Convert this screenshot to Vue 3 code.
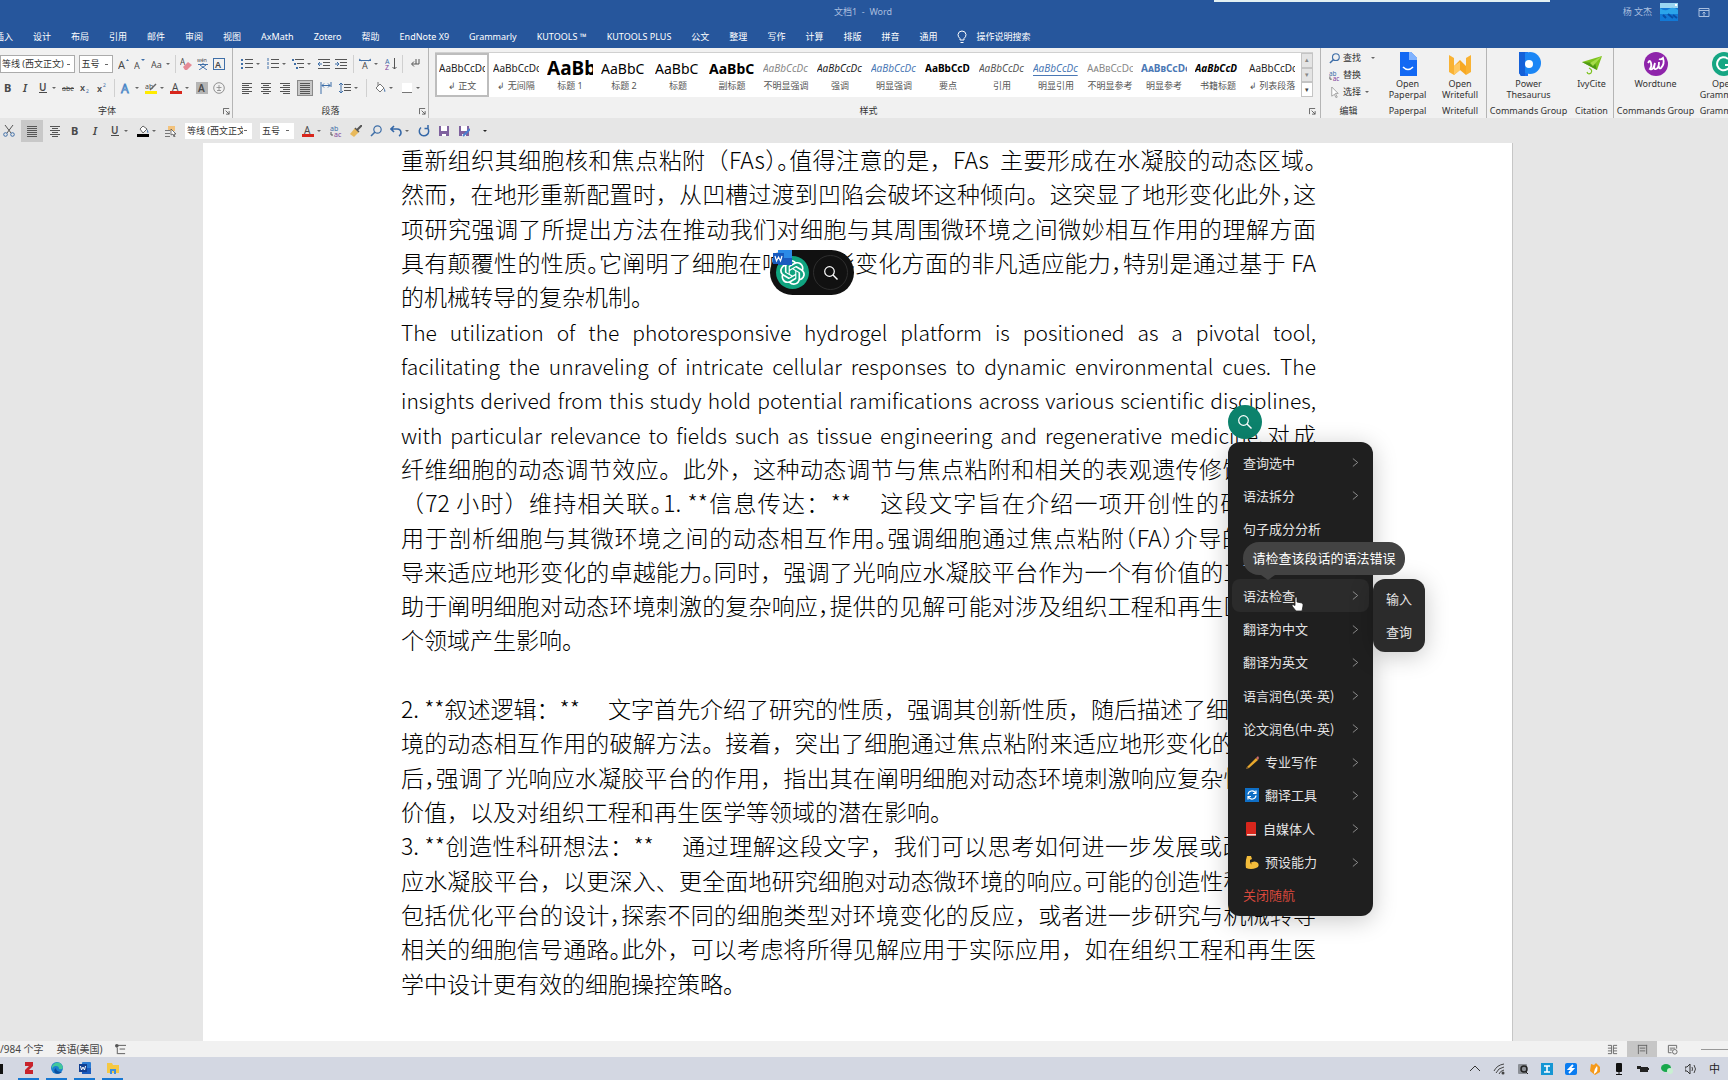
<script setup>
const t = (s, x, y, size, fill, extra = '') =>
  `<text x="${x}" y="${y}" font-size="${size}" fill="${fill}" font-family="Noto Sans, sans-serif" ${extra}>${s}</text>`
const rows = (list, color = '#555') =>
  list.map(([x1, y, x2]) => `<path d="M${x1} ${y}.5H${x2}" stroke="${color}" stroke-width="1"/>`).join('')
const blue = '#3f6fa8'
const gray = '#4a4a4a'

const icons = {
  bold: t('B', 2, 10, 11, gray, 'font-weight="700"'),
  italic: t('I', 4, 10, 11, gray, 'font-style="italic" font-weight="600"'),
  underline: t('U', 2, 9, 10, gray, 'font-weight="600"') + rows([[2, 10, 10]], gray),
  strike: t('abc', 0, 9, 7, gray) + rows([[0, 6, 12]], gray),
  sub: t('x', 1, 9, 9, gray, 'font-weight="600"') + t('2', 7, 11, 5, blue),
  sup: t('x', 1, 10, 9, gray, 'font-weight="600"') + t('2', 7, 5, 5, blue),
  grow: t('A', 0, 11, 11, gray) + `<path d="M8 3l1.500-2 1.500 2z" fill="${blue}"/>`,
  shrink: t('A', 0, 11, 9, gray) + `<path d="M7 1h4L9 3z" fill="${blue}"/>`,
  aa: t('Aa', 0, 10, 9, gray),
  eraser: t('A', 0, 7, 8, gray) + '<path d="M3 9l5-5 4 3-5 5H5z" fill="#e58a96"/>',
  pinyin: t('wén', 0, 4, 5, gray) + `<path d="M1 6.500h10M6 5v2M9 7L2 12M3 7l7 5" stroke="${blue}" fill="none"/>`,
  boxA: `<rect x=".5" y=".5" width="11" height="11" fill="none" stroke="${blue}"/>` + t('A', 2, 10, 9, gray, 'font-weight="600"'),
  outlineA: t('A', 1, 11, 12, '#eaf2fb', 'stroke="#4b86c6" stroke-width=".8"'),
  marker: t('ab', 0, 7, 7, gray) + '<path d="M5 8l6-6" stroke="#666" stroke-width="1.500"/><rect y="9" width="12" height="3" fill="#ffeb00"/>',
  colorA: t('A', 2, 9, 10, gray) + '<rect y="9" width="12" height="3" fill="#d8261c"/>',
  shadeA: '<rect width="12" height="12" fill="#b5b5b5"/>' + t('A', 2, 10, 10, gray, 'font-weight="600"'),
  circled: '<circle cx="6" cy="6" r="5.300" fill="none" stroke="#777" stroke-width=".8"/><path d="M3.500 5.500h5M6 3v6M4 8.500h4" stroke="#888" stroke-width=".8"/>',
  bullets: rows([[4, 1, 12], [4, 5, 12], [4, 9, 12]]) + `<path d="M0 1h2v2H0zM0 5h2v2H0zM0 9h2v2H0z" fill="${blue}"/>`,
  numbers: rows([[4, 1, 12], [4, 5, 12], [4, 9, 12]]) + `<path d="M1 0v3M1 4v3M1 8v3" stroke="${blue}"/>`,
  multi: rows([[3, 1, 12], [5, 5, 12], [7, 9, 12]]) + `<path d="M0 1h2v2H0zM2 5h2v2H2zM4 9h2v2H4z" fill="${blue}"/>`,
  outdent: rows([[0, 1, 12], [5, 4, 12], [5, 7, 12], [0, 10, 12]]) + `<path d="M4 6H0M2 4L0 6l2 2" stroke="${blue}" fill="none"/>`,
  indent: rows([[0, 1, 12], [5, 4, 12], [5, 7, 12], [0, 10, 12]]) + `<path d="M0 6h4M2 4l2 2-2 2" stroke="${blue}" fill="none"/>`,
  asian: t('A', 3, 11, 9, gray) + `<path d="M0 1l3 2M12 1L9 3M0 2.500h12" stroke="${blue}" fill="none"/>`,
  sort: t('A', 0, 6, 7, blue) + t('Z', 0, 12, 7, '#80459b') + '<path d="M9.500 0v11M7.500 9l2 2 2-2" stroke="#555" fill="none"/>',
  mark: '<path d="M10 1v5H3M5 3.500L2.500 6 5 8.500M7 1v5" stroke="#555" fill="none"/>',
  left: rows([[1, 1, 11], [1, 3, 8], [1, 5, 11], [1, 7, 8], [1, 9, 11], [1, 11, 8]]),
  center: rows([[1, 1, 11], [3, 3, 9], [1, 5, 11], [3, 7, 9], [1, 9, 11], [3, 11, 9]]),
  right: rows([[1, 1, 11], [4, 3, 11], [1, 5, 11], [4, 7, 11], [1, 9, 11], [4, 11, 11]]),
  justify: rows([[1, 1, 11], [1, 3, 11], [1, 5, 11], [1, 7, 11], [1, 9, 11], [1, 11, 11]]),
  spread: `<path d="M1 0v12M11 0v5M2 3.500h8M4 1.500L2 3.500l2 2M8 1.500l2 2-2 2" stroke="${blue}" fill="none"/>`,
  spacing: rows([[5, 2, 12], [5, 5, 12], [5, 8, 12]]) + `<path d="M2 1v10M0 3l2-2 2 2M0 9l2 2 2-2" stroke="${blue}" fill="none"/>`,
  bucket: '<path d="M2 6l4-4 4 4-4 4z" fill="#fff" stroke="#777"/><path d="M4 0v4" stroke="#777"/><path d="M10 6q2 3 1 4-1 0-1-4" fill="#3f6fa8"/>',
  bucketBlack: '<path d="M3 4l3-3 4 3-4 4z" fill="#fff" stroke="#666"/><path d="M10 4q2 3 1 4-1 0-1-4" fill="#3f6fa8"/><rect y="9" width="12" height="3" fill="#000"/>',
  border: '<path d="M1 1h10v9H1z" fill="#fff"/><path d="M1 10.500h10" stroke="#777"/>',
  cut: '<path d="M2 0l6 8M10 0L4 8" stroke="#555" fill="none"/><circle cx="2.500" cy="9.500" r="1.800" fill="none" stroke="#3f6fa8"/><circle cx="9.500" cy="9.500" r="1.800" fill="none" stroke="#3f6fa8"/>',
  pick: '<path d="M3 1h7v5H3z" fill="#f2c27c"/><path d="M0 5.500h5M0 8.500h5M0 11.500h5" stroke="#777"/><path d="M6 4l5 5H9l1 3-1 0-1-3-2 1z" fill="#fff" stroke="#555" stroke-width=".8"/>',
  replace: t('ab', 0, 6, 7, blue) + t('ac', 4, 12, 7, '#80459b') + '<path d="M1 7v3h2" stroke="#555" fill="none"/>',
  brush: '<path d="M12 0L7 5" stroke="#555" stroke-width="2"/><path d="M5 3l4 4-5 5-4-3z" fill="#e8b95c"/><path d="M5 3l4 4" stroke="#555" stroke-width="1.500"/>',
  find: '<circle cx="7.500" cy="4.500" r="3.700" fill="none" stroke="#3f6fa8" stroke-width="1.200"/><path d="M5 7l-4 4" stroke="#3f6fa8" stroke-width="1.600"/>',
  undo: '<path d="M4 1L1 4l3 3M1 4h6q4 0 4 4 0 2-2 3" fill="none" stroke="#3568a8" stroke-width="1.600"/>',
  redo: '<path d="M9.500 3A4.700 4.700 0 1 1 3 2.500M6.500 3.500H10V0" fill="none" stroke="#3568a8" stroke-width="1.500"/>',
  save: '<path d="M1 1h10v10H1z" fill="#80629f"/><path d="M3 1h6v5H3zM4 9h4v2H4z" fill="#fff"/>',
  saveEdit: '<path d="M1 1h10v10H1z" fill="#80629f"/><path d="M3 1h6v5H3zM4 9h4v2H4z" fill="#fff"/><path d="M5 11l7-7" stroke="#4a7fd0" stroke-width="2"/>',
  arrow: '<path d="M3 0l7 7H7l2 4-1.500.500L6 8l-3 2z" fill="#fff" stroke="#888" stroke-width=".8"/>',
  book: '<path d="M1 1.500h4v9H1M11 1.500H7v9h4M1 4.500h4M7 4.500h4M1 7.500h4M7 7.500h4" fill="none" stroke="#666"/>',
  page: '<path d="M1.500 1v10M10.500 1v10M1 1.500h10M3 4.500h6M3 7.500h6" fill="none" stroke="#666"/>',
  web: '<path d="M10.500 5V1.500h-9v8H5M3 4.500h6M3 6.500h3" fill="none" stroke="#666"/><circle cx="8.500" cy="8.500" r="2.500" fill="none" stroke="#666"/>',
  track: '<path d="M3 1.500h9M5 5.500h6M3 10.500h8M2.500 4v7" fill="none" stroke="#555"/><circle cx="2" cy="2" r="2" fill="#555"/>',
}

const fontRow1 = [
  { i: 'grow', n: '增大字号' }, { i: 'shrink', n: '减小字号' }, { i: 'aa', n: '更改大小写', d: 1 }, { sep: 1 },
  { i: 'eraser', n: '清除格式' }, { i: 'pinyin', n: '拼音指南' }, { i: 'boxA', n: '字符边框' },
]
const fontRow2 = [
  { i: 'bold', n: '加粗' }, { i: 'italic', n: '倾斜' }, { i: 'underline', n: '下划线', d: 1 }, { i: 'strike', n: '删除线' },
  { i: 'sub', n: '下标' }, { i: 'sup', n: '上标' }, { sep: 1 }, { i: 'outlineA', n: '文本效果', d: 1 },
  { i: 'marker', n: '突出显示', d: 1 }, { i: 'colorA', n: '字体颜色', d: 1 }, { i: 'shadeA', n: '字符底纹' }, { i: 'circled', n: '带圈字符' },
]
const paraRow1 = [
  { i: 'bullets', n: '项目符号', d: 1 }, { i: 'numbers', n: '编号', d: 1 }, { i: 'multi', n: '多级列表', d: 1 },
  { i: 'outdent', n: '减少缩进' }, { i: 'indent', n: '增加缩进' }, { sep: 1 }, { i: 'asian', n: '中文版式', d: 1 },
  { i: 'sort', n: '排序' }, { sep: 1 }, { i: 'mark', n: '显示标记' },
]
const paraRow2 = [
  { i: 'left', n: '左对齐' }, { i: 'center', n: '居中' }, { i: 'right', n: '右对齐' }, { i: 'justify', n: '两端对齐', on: 1 },
  { i: 'spread', n: '分散对齐' }, { i: 'spacing', n: '行距', d: 1 }, { sep: 1 }, { i: 'bucket', n: '底纹', d: 1 }, { i: 'border', n: '边框', d: 1 },
]
const quickA = [
  { i: 'cut', n: '剪切' }, { i: 'justify', n: '两端对齐', on: 1 }, { i: 'center', n: '居中' }, { i: 'bold', n: '加粗' },
  { i: 'italic', n: '倾斜' }, { i: 'underline', n: '下划线', d: 1 }, { i: 'bucketBlack', n: '底纹', d: 1 }, { i: 'pick', n: '选择对象' },
]
const quickB = [
  { i: 'colorA', n: '字体颜色', d: 1 }, { i: 'replace', n: '替换' }, { i: 'brush', n: '格式刷' }, { i: 'find', n: '查找' },
  { i: 'undo', n: '撤消', d: 1 }, { i: 'redo', n: '重复' }, { i: 'save', n: '保存' }, { i: 'saveEdit', n: '另存为' },
]

const tabs = ['插入', '设计', '布局', '引用', '邮件', '审阅', '视图', 'AxMath', 'Zotero', '帮助', 'EndNote X9', 'Grammarly',
  'KUTOOLS ™', 'KUTOOLS PLUS', '公文', '整理', '写作', '计算', '排版', '拼音', '通用']

const styles = [
  { s: 'AaBbCcDc', n: '↲ 正文', c: 'chosen' }, { s: 'AaBbCcDc', n: '↲ 无间隔' }, { s: 'AaBb', n: '标题 1', c: 'h1' },
  { s: 'AaBbC', n: '标题 2', c: 'h2' }, { s: 'AaBbC', n: '标题', c: 'h2' }, { s: 'AaBbC', n: '副标题', c: 'h2 strong' },
  { s: 'AaBbCcDc', n: '不明显强调', c: 'it pale' }, { s: 'AaBbCcDc', n: '强调', c: 'it' }, { s: 'AaBbCcDc', n: '明显强调', c: 'it blue' },
  { s: 'AaBbCcD', n: '要点', c: 'strong' }, { s: 'AaBbCcDc', n: '引用', c: 'it dim' }, { s: 'AaBbCcDc', n: '明显引用', c: 'it blue ul' },
  { s: 'AaBbCcDc', n: '不明显参考', c: 'pale caps' }, { s: 'AaBbCcDc', n: '明显参考', c: 'blue strong caps' },
  { s: 'AaBbCcD', n: '书籍标题', c: 'strong it' }, { s: 'AaBbCcDc', n: '↲ 列表段落' },
]

const addins = [
  { n: 'Open Paperpal', g: 'Paperpal', w: 'mid',
    svg: '<path d="M4 0h11l6 6v18H4z" fill="#1268f3"/><path d="M13 0h2l6 6v2h-8z" fill="#7fb2ff"/><path d="M7 15q5 5 10 0" stroke="#fff" stroke-width="1.600" fill="none"/>' },
  { n: 'Open Writefull', g: 'Writefull', w: 'mid', end: 1,
    svg: '<path d="M1 3l5 3v17l-5-3z" fill="#f9b233"/><path d="M23 3l-5 3v17l5-3z" fill="#f9b233"/><path d="M6 14l6-6 6 6v9l-6-5-6 5z" fill="#f7a823"/><path d="M6 14l6-4v8l-6 5z" fill="#ffc861"/>' },
  { n: 'Power Thesaurus', g: 'Commands Group', w: 'wide',
    svg: '<path d="M2 0h9v24l-7 0-2-3z" fill="#1d6ff2"/><circle cx="13" cy="11" r="11" fill="#1b86f5"/><path d="M2 0h6v24H4l-2-3z" fill="#1460d8"/><circle cx="12" cy="12" r="4" fill="#fff"/>' },
  { n: 'IvyCite', g: 'Citation', w: 'slim', end: 1,
    svg: '<path d="M2 10L22 4l-5 14z" fill="#7dc21e"/><path d="M2 10l13 1 2 7z" fill="#4f9a12"/><path d="M22 4L10 11l3 3z" fill="#a6dc4a"/><path d="M9 16q4 2 2 5-3 2-4-1" fill="none" stroke="#7dc21e" stroke-width="1.200"/>' },
  { n: 'Wordtune', g: 'Commands Group', w: 'wide',
    svg: '<circle cx="12" cy="12" r="12" fill="#8e24aa"/><path d="M4 11q2-4 3 0t-1 6q3 2 5-6-2 7 1 6t3-7q-1 8 2 6 4-4 2-10-2 2-4 1" fill="none" stroke="#fff" stroke-width="1.800"/>' },
  { n: 'Open Grammarly', g: 'Grammarly', w: 'mid',
    svg: '<circle cx="12" cy="12" r="12" fill="#15a683"/><path d="M16 7a6.500 6.500 0 1 0 2 6h-5" fill="none" stroke="#fff" stroke-width="2"/>' },
]

// Text between bars is set with half-width punctuation; `han` is a Chinese tail on an English line.
const lines = [
  { t: '重新组织其细胞核和焦点粘附（FAs）|。|值得注意的是，FAs \u00a0主要形成在水凝胶的动态区域|。' },
  { t: '然而，在地形重新配置时，从凹槽过渡到凹陷会破坏这种倾向。这突显了地形变化此外|，|这' },
  { t: '项研究强调了所提出方法在推动我们对细胞与其周围微环境之间微妙相互作用的理解方面' },
  { t: '具有颠覆性的性质|。|它阐明了细胞在响应地形变化方面的非凡适应能力|，|特别是通过基于 FA' },
  { t: '的机械转导的复杂机制。', k: 'last' },
  { t: 'The utilization of the photoresponsive hydrogel platform is positioned as a pivotal tool,', k: 'en' },
  { t: 'facilitating the unraveling of intricate cellular responses to dynamic environmental cues. The', k: 'en' },
  { t: 'insights derived from this study hold potential ramifications across various scientific disciplines,', k: 'en' },
  { t: 'with particular relevance to fields such as tissue engineering and regenerative medicine.', han: '对成', k: 'en' },
  { t: '纤维细胞的动态调节效应。此外，这种动态调节与焦点粘附和相关的表观遗传修饰在长期' },
  { t: '（72 小时）维持相关联|。|1. **信息传达：**\u2003 这段文字旨在介绍一项开创性的研究，应' },
  { t: '用于剖析细胞与其微环境之间的动态相互作用|。|强调细胞通过焦点粘附|（FA）|介导的机械转' },
  { t: '导来适应地形变化的卓越能力|。|同时，强调了光响应水凝胶平台作为一个有价值的工具，有' },
  { t: '助于阐明细胞对动态环境刺激的复杂响应|，|提供的见解可能对涉及组织工程和再生医学等多' },
  { t: '个领域产生影响。', k: 'last' },
  { t: '\u00a0', k: 'last' },
  { t: '2. **叙述逻辑：**\u2003 文字首先介绍了研究的性质，强调其创新性质，随后描述了细胞与微环' },
  { t: '境的动态相互作用的破解方法。接着，突出了细胞通过焦点粘附来适应地形变化的能力|。|最' },
  { t: '后|，|强调了光响应水凝胶平台的作用，指出其在阐明细胞对动态环境刺激响应复杂性方面的' },
  { t: '价值，以及对组织工程和再生医学等领域的潜在影响。', k: 'last' },
  { t: '3. **创造性科研想法：**\u2003 通过理解这段文字，我们可以思考如何进一步发展或改进光响' },
  { t: '应水凝胶平台，以更深入、更全面地研究细胞对动态微环境的响应|。|可能的创造性科研想法' },
  { t: '包括优化平台的设计|，|探索不同的细胞类型对环境变化的反应，或者进一步研究与机械转导' },
  { t: '相关的细胞信号通路|。|此外，可以考虑将所得见解应用于实际应用，如在组织工程和再生医' },
  { t: '学中设计更有效的细胞操控策略。', k: 'last' },
].map((l) => ({ ...l, parts: l.t.split('|') }))

const menu = [
  { n: '查询选中', m: 1 }, { n: '语法拆分', m: 1 }, { n: '句子成分分析' }, { n: '单词解析' }, { n: '语法检查', m: 1, on: 1 },
  { n: '翻译为中文', m: 1 }, { n: '翻译为英文', m: 1 }, { n: '语言润色(英-英)', m: 1 }, { n: '论文润色(中-英)', m: 1 },
  { n: '专业写作', m: 1, e: '<path d="M2 12L11 3l2 2-9 8-3 1z" fill="#e9a82c"/><path d="M11 3l2-2 1 2-1 2z" fill="#c96b6b"/><path d="M2 12l2 1-3 1z" fill="#5a4632"/>' },
  { n: '翻译工具', m: 1, e: '<rect x="0" y="0" width="14" height="14" fill="#0f6fc6"/><path d="M3 6.500A4 4 0 0 1 10.500 5M11 2.500V5.500H8M11 7.500A4 4 0 0 1 3.500 9M3 11.500V8.500h3" fill="none" stroke="#fff" stroke-width="1.200"/>' },
  { n: '自媒体人', m: 1, book: 1, e: '<rect x="1" y="0" width="10" height="14" rx="1" fill="#d8261c"/><path d="M2 12h9v1.500H2z" fill="#f0d9d0"/>' },
  { n: '预设能力', m: 1, e: '<path d="M2 1h4l1 3-2 1 0 3q5-3 8 0 2 4-2 5-5 2-10 0-1-6 1-12z" fill="#f3bc3b"/><path d="M5 8l2 1" stroke="#b97f17"/>' },
  { n: '关闭随航', red: 1 },
]

const pinned = [
  { n: 'Zotero', s: '<path d="M2 0h8v4L6 8h4v4H2V8l4-4H2z" fill="#c8232b"/>' },
  { n: 'Edge', s: '<circle cx="6" cy="6" r="6" fill="#1b7fd0"/><path d="M1 4q3-5 8-3 3 2 3 5-1 2-4 1 0-3-3-3-3 0-4 3z" fill="#43c79a"/><path d="M5 6q0 4 6 4-3 3-7 1-2-3 1-5z" fill="#0c4f9e"/>' },
  { n: 'Word', s: '<rect x="3" y="0" width="9" height="12" rx="1" fill="#2b7cd3"/><rect x="3" y="6" width="9" height="6" fill="#185abd"/><rect x="0" y="2" width="8" height="8" fill="#103f91"/><path d="M1.500 4l1 4L4 5l1.500 3 1-4" stroke="#fff" fill="none"/>' },
  { n: '文件资源管理器', s: '<path d="M0 1h5l1 2h6v8H0z" fill="#f5c843"/><path d="M3 7h6v5H7V9H5v3H3z" fill="#3f8fdc"/>' },
]
const tray = [
  { n: '显示隐藏的图标', s: '<path d="M1 8l5-5 5 5" fill="none" stroke="#333"/>' },
  { n: '网络', s: '<path d="M1 8Q4 2 11 1M3 10Q5 5 11 4M6 11q1-3 5-4" fill="none" stroke="#444"/><circle cx="10" cy="10" r="1.500" fill="#444"/>' },
  { n: '截图', s: '<rect x="1" y="1" width="9" height="10" rx="1" fill="#8b8f96"/><circle cx="7" cy="6" r="3" fill="none" stroke="#222" stroke-width="1.500"/><path d="M9 9l2 2" stroke="#222"/>' },
  { n: '输入工具', s: '<rect width="12" height="12" fill="#1496d4"/><path d="M3 3h6M3 9h6M6 3v6" stroke="#fff" stroke-width="1.600"/>' },
  { n: '随航', s: '<rect width="12" height="12" rx="2" fill="#0a7cf0"/><path d="M8 2L4 6h4l-4 4" fill="none" stroke="#fff" stroke-width="1.800"/>' },
  { n: '火绒', s: '<path d="M2 1l3 1 2-2 4 4v5l-5 3-5-4z" fill="#f59a1b"/><path d="M8 3q2 5-3 8 0-5 3-8z" fill="#fff"/>' },
  { n: '麦克风', s: '<rect x="3" y="0" width="6" height="9" rx="1" fill="#111"/><path d="M6 9v2M3 11.500h6" stroke="#111"/>' },
  { n: '电池', s: '<path d="M3 4h8v5H3zM11 5h1v2h-1zM0 3h4v3H0z" fill="#222"/>' },
  { n: '微信', s: '<ellipse cx="5" cy="5" rx="5" ry="4" fill="#18a84c"/><ellipse cx="9" cy="8" rx="3" ry="3" fill="#c8f0d2"/>' },
  { n: '音量', s: '<path d="M0 4h2l3-3v10L2 8H0z" fill="none" stroke="#333"/><path d="M7 4q1 2 0 4M9 2q3 4 0 8" fill="none" stroke="#444"/>' },
]
</script>

<template>
  <div class="app">
    <header class="title">
      <span class="peek"></span>
      <span class="doc-name">文档1 &nbsp;- &nbsp;Word</span>
      <div class="user">
        <span>杨 文杰</span>
        <svg class="avatar" viewBox="0 0 18 18"><rect width="18" height="18" fill="#1279d6" /><path d="M0 0h18v5H0z" fill="#9ad6f2" /><path d="M0 5q5 4 9 1t9 1v4H0z" fill="#2ba4ea" /><path d="M3 12l3 3M8 11l5 4M13 12l4 3" stroke="#0a4ea6" stroke-width="2" /><path d="M15 1h2v2h-2z" fill="#fff" /></svg>
        <button class="plain" aria-label="功能区显示选项"><svg width="12" height="12" viewBox="0 0 12 12"><path d="M1 2.500h10v8H1zM1 4.500h10M6 10V6M4.500 7.500L6 6l1.500 1.500" fill="none" stroke="#a9bfdf" /></svg></button>
      </div>
    </header>

    <nav class="tabs">
      <a v-for="x in tabs" :key="x" href="#">{{ x }}</a>
      <a href="#" class="tell"><svg width="10" height="14" viewBox="0 0 10 14"><path d="M3 10V8.500Q1 7 1 4.500 1.500 1 5 1t4 3.500Q9 7 7 8.500V10zM3.500 12.500h3" fill="none" stroke="#fff" /></svg>操作说明搜索</a>
    </nav>

    <section class="ribbon">
      <div class="group font-group">
        <div class="tools">
          <div class="tool-row">
            <select class="box font-name" aria-label="字体"><option>等线 (西文正文)</option></select>
            <select class="box font-size" aria-label="字号"><option>五号</option></select>
            <template v-for="(b, k) in fontRow1" :key="k">
              <i v-if="b.sep" class="sep"></i>
              <button v-else class="tool" :class="{ on: b.on }" :aria-label="b.n"><svg viewBox="0 0 12 12" v-html="icons[b.i]"></svg><span v-if="b.d" class="dd"></span></button>
            </template>
          </div>
          <div class="tool-row">
            <template v-for="(b, k) in fontRow2" :key="k">
              <i v-if="b.sep" class="sep"></i>
              <button v-else class="tool" :class="{ on: b.on }" :aria-label="b.n"><svg viewBox="0 0 12 12" v-html="icons[b.i]"></svg><span v-if="b.d" class="dd"></span></button>
            </template>
          </div>
        </div>
        <div class="label">字体<button class="launch" aria-label="字体设置"><svg viewBox="0 0 8 8"><path d="M.5 7V.5H7M3 3l4 4M7 3.500V7H3.500" fill="none" stroke="#555" /></svg></button></div>
      </div>

      <div class="group para-group">
        <div class="tools">
          <div v-for="(row, r) in [paraRow1, paraRow2]" :key="r" class="tool-row">
            <template v-for="(b, k) in row" :key="k">
              <i v-if="b.sep" class="sep"></i>
              <button v-else class="tool" :class="{ on: b.on }" :aria-label="b.n"><svg viewBox="0 0 12 12" v-html="icons[b.i]"></svg><span v-if="b.d" class="dd"></span></button>
            </template>
          </div>
        </div>
        <div class="label">段落<button class="launch" aria-label="段落设置"><svg viewBox="0 0 8 8"><path d="M.5 7V.5H7M3 3l4 4M7 3.500V7H3.500" fill="none" stroke="#555" /></svg></button></div>
      </div>

      <div class="group style-group">
        <div class="gallery">
          <button v-for="x in styles" :key="x.n" class="style" :class="x.c"><span class="sample">{{ x.s }}</span><span class="name">{{ x.n }}</span></button>
          <div class="scroller"><button aria-label="上一行">▴</button><button aria-label="下一行">▾</button><button class="more" aria-label="其他">▾</button></div>
        </div>
        <div class="label">样式<button class="launch" aria-label="样式窗格"><svg viewBox="0 0 8 8"><path d="M.5 7V.5H7M3 3l4 4M7 3.500V7H3.500" fill="none" stroke="#555" /></svg></button></div>
      </div>

      <div class="group edit-group">
        <div class="edits">
          <button><svg viewBox="0 0 12 12" v-html="icons.find"></svg>查找<span class="dd far"></span></button>
          <button><svg viewBox="0 0 12 12" v-html="icons.replace"></svg>替换</button>
          <button><svg viewBox="0 0 12 12" v-html="icons.arrow"></svg>选择<span class="dd"></span></button>
        </div>
        <div class="label">编辑</div>
      </div>

      <div v-for="a in addins" :key="a.n" class="group addin" :class="[a.w, { end: a.end }]">
        <button><svg viewBox="0 0 24 24" v-html="a.svg"></svg><span>{{ a.n }}</span></button>
        <div class="label">{{ a.g }}</div>
      </div>
    </section>

    <div class="quick">
      <button v-for="(b, k) in quickA" :key="k" class="tool" :class="{ on: b.on }" :aria-label="b.n"><svg viewBox="0 0 12 12" v-html="icons[b.i]"></svg><span v-if="b.d" class="dd"></span></button>
      <select class="box q-name" aria-label="快速字体"><option>等线 (西文正文)</option></select>
      <select class="box q-size" aria-label="快速字号"><option>五号</option></select>
      <button v-for="(b, k) in quickB" :key="'b' + k" class="tool" :aria-label="b.n"><svg viewBox="0 0 12 12" v-html="icons[b.i]"></svg><span v-if="b.d" class="dd"></span></button>
      <button class="tool" aria-label="自定义"><span class="dd dark"></span></button>
    </div>

    <main class="work">
      <article class="paper">
        <p v-for="(l, k) in lines" :key="k" :class="l.k"><span v-for="(s, j) in l.parts" :key="j" :class="{ tight: j % 2 }">{{ s }}</span><span v-if="l.han" class="han">{{ l.han }}</span></p>
      </article>
    </main>

    <footer class="status">
      <span>/984 个字</span><span>英语(美国)</span>
      <svg viewBox="0 0 12 12" v-html="icons.track"></svg>
      <div class="views">
        <button aria-label="阅读视图"><svg viewBox="0 0 12 12" v-html="icons.book"></svg></button>
        <button class="on" aria-label="页面视图"><svg viewBox="0 0 12 12" v-html="icons.page"></svg></button>
        <button aria-label="Web 版式视图"><svg viewBox="0 0 12 12" v-html="icons.web"></svg></button>
        <i class="track"></i>
      </div>
    </footer>

    <div class="taskbar">
      <i class="edge-bit"></i>
      <button v-for="p in pinned" :key="p.n" class="pin" :aria-label="p.n"><svg viewBox="0 0 12 12" v-html="p.s"></svg></button>
      <div class="tray">
        <button v-for="p in tray" :key="p.n" :aria-label="p.n"><svg viewBox="0 0 12 12" v-html="p.s"></svg></button>
        <span>中</span>
      </div>
    </div>

    <div class="pill">
      <button class="gpt" aria-label="助手"><svg viewBox="0 0 24 24"><path fill="#fff" d="M22.2819 9.8211a5.9847 5.9847 0 0 0-.5157-4.9108 6.0462 6.0462 0 0 0-6.5098-2.9A6.0651 6.0651 0 0 0 4.9807 4.1818a5.9847 5.9847 0 0 0-3.9977 2.9 6.0462 6.0462 0 0 0 .7427 7.0966 5.98 5.98 0 0 0 .511 4.9107 6.051 6.051 0 0 0 6.5146 2.9001A5.9847 5.9847 0 0 0 13.2599 24a6.0557 6.0557 0 0 0 5.7718-4.2058 5.9894 5.9894 0 0 0 3.9977-2.9001 6.0557 6.0557 0 0 0-.7475-7.0729zm-9.022 12.6081a4.4755 4.4755 0 0 1-2.8764-1.0408l.1419-.0804 4.7783-2.7582a.7948.7948 0 0 0 .3927-.6813v-6.7369l2.02 1.1686a.071.071 0 0 1 .038.052v5.5826a4.504 4.504 0 0 1-4.4945 4.4944zm-9.6607-4.1254a4.4708 4.4708 0 0 1-.5346-3.0137l.142.0852 4.783 2.7582a.7712.7712 0 0 0 .7806 0l5.8428-3.3685v2.3324a.0804.0804 0 0 1-.0332.0615L9.74 19.9502a4.4992 4.4992 0 0 1-6.1408-1.6464zM2.3408 7.8956a4.485 4.485 0 0 1 2.3655-1.9728V11.6a.7664.7664 0 0 0 .3879.6765l5.8144 3.3543-2.0201 1.1685a.0757.0757 0 0 1-.071 0l-4.8303-2.7865A4.504 4.504 0 0 1 2.3408 7.872zm16.5963 3.8558L13.1038 8.364 15.1192 7.2a.0757.0757 0 0 1 .071 0l4.8303 2.7913a4.4944 4.4944 0 0 1-.6765 8.1042v-5.6772a.79.79 0 0 0-.407-.667zm2.0107-3.0231l-.142-.0852-4.7735-2.7818a.7759.7759 0 0 0-.7854 0L9.409 9.2297V6.8974a.0662.0662 0 0 1 .0284-.0615l4.8303-2.7866a4.4992 4.4992 0 0 1 6.6802 4.66zM8.3065 12.863l-2.02-1.1638a.0804.0804 0 0 1-.038-.0567V6.0742a4.4992 4.4992 0 0 1 7.3757-3.4537l-.142.0805L8.704 5.459a.7948.7948 0 0 0-.3927.6813zm1.0976-2.3654l2.602-1.4998 2.6069 1.4998v2.9994l-2.5974 1.4997-2.6067-1.4997Z" /></svg></button>
      <button class="seek" aria-label="搜索"><svg viewBox="0 0 16 16"><circle cx="6.500" cy="6.500" r="4.800" fill="none" stroke="#fff" stroke-width="1.200" /><path d="M10 10l4.500 4.500" stroke="#fff" stroke-width="1.400" /></svg></button>
      <svg class="word-badge" viewBox="0 0 20 15"><rect x="5" width="14" height="15" fill="#2b8ae6" /><rect x="5" y="8" width="14" height="7" fill="#1a5bbf" /><rect y="3" width="11" height="11" fill="#185abd" /><path d="M2 6l1.500 5L5.500 7l2 4L9 6" fill="none" stroke="#fff" stroke-width="1.200" /></svg>
    </div>

    <div class="assist">
      <button class="orb" aria-label="搜索"><svg viewBox="0 0 16 16"><circle cx="6.500" cy="6.500" r="4.800" fill="none" stroke="#fff" stroke-width="1.200" /><path d="M10 10l4.500 4.500" stroke="#fff" stroke-width="1.400" /></svg></button>
      <div class="menu">
        <button v-for="m in menu" :key="m.n" :class="{ on: m.on, red: m.red }">
          <svg v-if="m.e" class="emoji" :class="{ narrow: m.book }" viewBox="0 0 14 14" v-html="m.e"></svg>
          <span>{{ m.n }}</span>
          <svg v-if="m.m" class="chev" viewBox="0 0 8 12"><path d="M1 1.500L6.500 6 1 10.500" fill="none" stroke="#999" /></svg>
        </button>
      </div>
      <div class="submenu"><button>输入</button><button>查询</button></div>
      <div class="tip" role="tooltip">请检查该段话的语法错误</div>
      <svg class="hand" viewBox="0 0 13 16"><path d="M4 1.500q1.500-1 2 0V6l5 1q1.500.500 1 3l-1 5H5L1 10q-.500-1.500 1-1.500l2 1z" fill="#fff" stroke="#222" stroke-width=".8" /></svg>
    </div>
  </div>
</template>

<style>
html, body { margin: 0; overflow: hidden; }
</style>

<style scoped>
.app {
  position: relative; display: flex; flex-direction: column; min-height: 100vh; overflow: hidden;
  font: 9px/12px "Noto Sans", "Noto Sans CJK SC", sans-serif; color: #333; background: #e6e6e6;
}
button { border: 0; padding: 0; margin: 0; background: none; font: inherit; color: inherit; }
button, select { flex: none; }
svg { display: block; flex: none; }

.title { position: relative; display: flex; align-items: center; height: 24px; background: #26569c; color: #aabfdf; }
.doc-name { margin-left: 834px; font-size: 9px; }
.peek { position: absolute; left: 1214px; top: 0; width: 336px; height: 2px; background: #e3f1f3; }
.user { display: flex; align-items: center; gap: 8px; margin-left: auto; margin-right: 18px; }
.avatar { width: 18px; height: 18px; }
.user .plain { margin-left: 12px; }

.tabs { display: flex; align-items: center; box-sizing: border-box; height: 24px; gap: 20px; padding-top: 2px; background: #26569c; white-space: nowrap; }
.tabs a { color: #fff; text-decoration: none; }
.tabs a:first-child { margin-left: -5px; }
.tell { display: flex; align-items: center; gap: 9px; }

.ribbon { display: flex; height: 70px; background: #f1f1f1; overflow: hidden; }
.group { display: flex; flex-direction: column; flex: none; justify-content: space-between; box-sizing: border-box; border-right: 1px solid #b5b5b5; padding-top: 4px; }
.label { position: relative; height: 13px; text-align: center; white-space: nowrap; color: #333; line-height: 12px; }
.launch { position: absolute; right: 2px; top: 3px; }
.launch svg { width: 7px; height: 7px; }
.font-group { width: 233px; }
.font-group .label { padding-right: 18px; }
.para-group { width: 196px; }
.tools { display: flex; flex-direction: column; gap: 4px; padding: 2px 7px 0 8px; }
.font-group .tools { padding-left: 2px; }
.tool-row { display: flex; justify-content: space-between; align-items: center; height: 20px; }
.tool { display: flex; align-items: center; gap: 2px; }
.tool svg { width: 12px; height: 12px; }
.tool.on { background: #c8c8c8; outline: 1px solid #8a8a8a; padding: 1px; }
.dd { width: 0; height: 0; border: 2px solid transparent; border-top-color: #666; border-bottom: 0; margin: 0 1px; }
.dd.far { margin-left: 7px; }
.sep { width: 1px; height: 18px; background: #d0d0d0; }
.box { appearance: none; height: 18px; border: 1px solid #ababab; border-radius: 0; padding: 0 8px 0 1px; color: #333; font: 9px/14px "Noto Sans", "Noto Sans CJK SC", sans-serif;
  background: #fff linear-gradient(#666, #666) no-repeat right 4px center / 3px 1px; }
.font-name { width: 75px; margin-left: -2px; }
.font-size { width: 34px; }

.style-group { flex: 1; min-width: 0; padding: 4px 2px 0 6px; }
.style-group .label { padding-right: 16px; }
.gallery { display: flex; height: 44px; margin-right: 5px; background: #fff; border-top: 1px solid #d0d0d0; overflow: hidden; }
.style { width: 54px; box-sizing: border-box; border: 2px solid transparent; display: flex; flex-direction: column; padding: 0 2px; overflow: hidden; }
.style.chosen { border-color: #bdbdbd; }
.sample { width: 100%; height: 25px; line-height: 27px; overflow: hidden; white-space: nowrap; text-align: left; color: #222; font-size: 10px; }
.name { width: 100%; text-align: center; white-space: nowrap; color: #555; line-height: 12px; }
.h1 .sample { font-size: 19px; font-weight: 700; color: #000; }
.h2 .sample { font-size: 14px; color: #000; }
.strong .sample { font-weight: 700; color: #000; }
.it .sample { font-style: italic; }
.pale .sample { color: #888; }
.dim .sample { color: #555; }
.blue .sample { color: #4a78b5; }
.ul .sample { text-decoration: underline; text-underline-offset: 3px; }
.caps .sample { font-variant: small-caps; }
.scroller { display: flex; flex-direction: column; width: 12px; margin-left: auto; }
.scroller button { flex: 1; background: #e4e4e4; border: 1px solid #c4c4c4; color: #888; font-size: 7px; line-height: 10px; }
.scroller .more { background: #fff; color: #444; }

.edit-group { width: 55px; border: 0; margin-right: 5px; }
.edits { display: flex; flex-direction: column; gap: 5px; padding-left: 8px; white-space: nowrap; }
.edits button { display: flex; align-items: center; gap: 3px; height: 12px; }
.edits svg { width: 11px; height: 11px; }
.addin { border: 0; }
.addin:last-child { margin-right: -22px; }
.addin.end { border-right: 1px solid #b5b5b5; }
.addin button { display: flex; flex-direction: column; align-items: center; gap: 2px; line-height: 11px; }
.addin svg { width: 24px; height: 24px; }
.addin button span { width: min-content; }
.mid { width: 53px; }
.wide { width: 83px; }
.slim { width: 44px; }

.quick { display: flex; align-items: center; gap: 8px; height: 25px; padding-left: 3px; background: #e6e6e6; }
.quick .on { outline: 0; padding: 5px; margin: 0 -2px; }
.quick .box { height: 16px; border-color: #fff; }
.q-name { width: 67px; }
.q-size { width: 34px; }
.quick .dark { border-top-color: #222; margin-left: 5px; }

.work { flex: 1; display: flex; padding: 0 215px 0 203px; }
.paper { flex: 1; min-width: 0; display: grid; grid-template-columns: minmax(0, 1fr); grid-auto-rows: minmax(34px, 1fr); padding: 0 196px 40px 198px; background: #fff; border-right: 1px solid #c6c6c6;
  font: 300 23px/32px "Noto Sans CJK SC", sans-serif; color: #000; }
.paper p { margin: 0; white-space: nowrap; text-align: justify; text-align-last: justify; }
.paper .last { text-align-last: left; }
.paper .tight { font-feature-settings: "halt"; }
.paper .en { font-size: 21px; line-height: 34px; }
.paper .han { font-size: 23px; line-height: 30px; }

.status { display: flex; align-items: center; gap: 13px; height: 16px; background: #f1f1f1; font-size: 10px; color: #444; }
.status svg { width: 11px; height: 11px; }
.views { display: flex; align-items: center; margin-left: auto; }
.views button { width: 30px; height: 16px; display: flex; align-items: center; justify-content: center; }
.views .on { background: #c6c6c6; }
.track { width: 27px; height: 1px; margin-left: 14px; background: #999; }

.taskbar { display: flex; align-items: center; height: 23px; gap: 7px; background: #d3d7e2; }
.edge-bit { width: 3px; height: 10px; background: #111; margin-right: 8px; }
.pin { width: 21px; height: 23px; display: flex; align-items: center; justify-content: center; border-bottom: 2px solid #1677d2; box-sizing: border-box; }
.pin svg, .tray svg { width: 12px; height: 12px; }
.tray { display: flex; align-items: center; gap: 12px; margin-left: auto; margin-right: 8px; font-size: 11px; color: #222; }

.pill { position: absolute; left: 770px; top: 250px; width: 84px; height: 45px; border-radius: 23px; background: #111; display: flex; align-items: center; justify-content: space-between; box-sizing: border-box; padding: 0 7px 0 6px; }
.pill button { display: flex; align-items: center; justify-content: center; width: 33px; height: 33px; border-radius: 50%; }
.gpt { background: #10a37f; }
.pill .gpt { background: #10a37f; }
.gpt svg { width: 25px; height: 25px; }
.seek { outline: 1px solid #2e2e2e; }
.seek svg, .orb svg { width: 16px; height: 16px; }
.word-badge { position: absolute; left: 3px; top: 0; width: 20px; height: 15px; }

.assist { position: absolute; left: 1228px; top: 405px; width: 145px; bottom: 164px; font: 13px/20px "Noto Sans CJK SC", sans-serif; color: #e4e4e4; }
.orb { position: absolute; left: 0; top: 0; width: 34px; height: 34px; border-radius: 50%; background: #0c826c; display: flex; align-items: center; justify-content: center; }
.menu { position: absolute; inset: 37px 0 0; box-sizing: border-box; padding: 4px; display: grid; grid-auto-rows: 1fr; background: #1f1f1f; border-radius: 12px; box-shadow: 0 4px 24px rgba(0, 0, 0, .22); }
.menu button { display: flex; align-items: center; padding: 0 10px 0 11px; border-radius: 8px; white-space: nowrap; }
.menu .on { background: #2b2b2b; }
.menu .red { color: #d8483c; }
.chev { width: 7px; height: 11px; margin-left: auto; }
.emoji { width: 14px; height: 14px; margin: 0 6px 0 2px; }
.narrow { margin-right: 4px; }
.submenu { position: absolute; left: 145px; top: 174px; width: 52px; height: 73px; box-sizing: border-box; padding: 4px 0; display: grid; background: #2b2b2b; border-radius: 12px; box-shadow: 0 4px 24px rgba(0, 0, 0, .22); }
.tip { position: absolute; left: 15px; top: 137px; width: 162px; height: 33px; line-height: 32px; text-align: center; white-space: nowrap; border-radius: 16px; background: #434343; color: #fff; }
.tip::after { content: ""; position: absolute; left: 18px; top: 33px; border: 7px solid transparent; border-top: 5px solid #434343; border-bottom: 0; }
.hand { position: absolute; left: 63px; top: 191px; width: 13px; height: 16px; }
</style>
